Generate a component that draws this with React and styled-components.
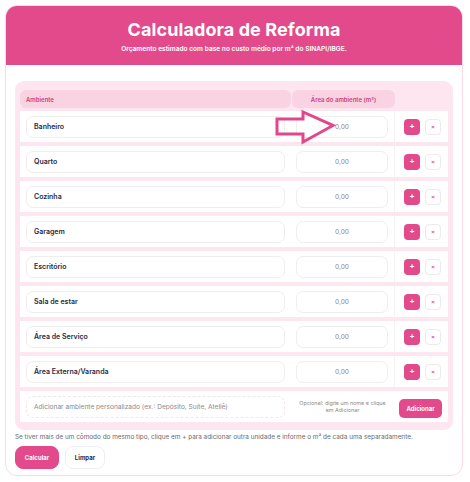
import React from "react";
import styled, { createGlobalStyle } from "styled-components";

const GlobalStyle = createGlobalStyle`
  body {
    margin: 0;
    background: #ffffff;
    font-family: Inter, "Liberation Sans", sans-serif;
  }
`;

const rooms = [
  "Banheiro",
  "Quarto",
  "Cozinha",
  "Garagem",
  "Escritório",
  "Sala de estar",
  "Área de Serviço",
  "Área Externa/Varanda",
];

const Page = styled.div`
  padding: 5px 7px 6px 5px;
`;

const Card = styled.div`
  border: 1px solid #fbdbe8;
  border-radius: 12px;
  overflow: hidden;
  background: #fff;
  padding-bottom: 6px;
`;

const Header = styled.header`
  background: #e24a8b;
  height: 59px;
  display: flex;
  flex-direction: column;
  align-items: center;
  justify-content: center;
  color: #fff;
`;

const Title = styled.h1`
  margin: 0;
  font-size: 18px;
  font-weight: 700;
  line-height: 22px;
  letter-spacing: 0.1px;
`;

const Subtitle = styled.p`
  margin: 4px 0 0;
  font-size: 6.6px;
  font-weight: 600;
`;

const Body = styled.div`
  padding: 16px 9px 0 9px;
`;

const Panel = styled.div`
  position: relative;
  background: #fde6ef;
  border-radius: 9px;
  padding: 9px 5px 8px 5px;
  display: flex;
  flex-direction: column;
  gap: 4px;
`;

const Cols = styled.div`
  display: grid;
  grid-template-columns: 271px 103px 1fr;
`;

const HeadRow = styled(Cols)`
  height: 18px;
  margin-bottom: -1px;
  gap: 1px;
`;

const HeadCell = styled.div`
  background: #fad3e3;
  border-radius: 6px;
  color: #c8427f;
  font-size: 6px;
  font-weight: 600;
  display: flex;
  align-items: center;
  justify-content: ${(p) => (p.$center ? "center" : "flex-start")};
  padding-left: ${(p) => (p.$center ? "0" : "6px")};
`;

const Row = styled(Cols)`
  background: #fff;
  height: 31px;
  align-items: center;
`;

const NameInput = styled.div`
  margin: 0 6px;
  height: 22px;
  border: 1px solid ${(p) => (p.$dashed ? "#f1e6ea" : "#eeeeee")};
  border-style: ${(p) => (p.$dashed ? "dashed" : "solid")};
  border-radius: 7px;
  box-sizing: border-box;
  display: flex;
  align-items: center;
  padding-left: 7px;
  font-size: ${(p) => (p.$dashed ? "6.6px" : "7px")};
  font-weight: ${(p) => (p.$dashed ? 400 : 600)};
  color: ${(p) => (p.$dashed ? "#8a8a8a" : "#1f2a44")};
`;

const AreaInput = styled.div`
  margin: 0 6px 0 5px;
  height: 22px;
  border: 1px solid #eeeeee;
  border-radius: 7px;
  box-sizing: border-box;
  display: flex;
  align-items: center;
  justify-content: center;
  font-size: 6.6px;
  color: #8a8a8a;
`;

const Hint = styled.div`
  font-size: 5.4px;
  line-height: 7px;
  color: #8a8a8a;
  text-align: center;
  padding: 0 4px;
`;

const Actions = styled.div`
  align-self: stretch;
  border-left: 1px solid #f6f1f3;
  display: flex;
  align-items: center;
  gap: 5px;
  padding-left: 9px;
`;

const PlusBtn = styled.button`
  width: 16px;
  height: 16px;
  border: none;
  border-radius: 4px;
  background: #e24a8b;
  color: #fff;
  font-size: 8px;
  font-weight: 700;
  padding: 0;
  display: flex;
  align-items: center;
  justify-content: center;
`;

const RemoveBtn = styled.button`
  width: 16px;
  height: 16px;
  border: 1px solid #f0e8eb;
  border-radius: 4px;
  background: #fff;
  color: #e24a8b;
  font-size: 6px;
  font-weight: 700;
  padding: 0;
  display: flex;
  align-items: center;
  justify-content: center;
`;

const AddBtn = styled.button`
  margin-left: 5px;
  width: 43px;
  height: 19px;
  border: none;
  border-radius: 5px;
  background: #e24a8b;
  color: #fff;
  font-family: inherit;
  font-size: 6px;
  font-weight: 700;
  padding: 0;
`;

const Arrow = styled.svg`
  position: absolute;
  left: 257px;
  top: 26px;
  pointer-events: none;
`;

const Note = styled.p`
  margin: 3px 0 0;
  font-size: 6.4px;
  color: #6b6b6b;
`;

const Buttons = styled.div`
  display: flex;
  gap: 6px;
  margin-top: 5px;
`;

const Button = styled.button`
  width: ${(p) => (p.$primary ? "44px" : "40px")};
  height: 23px;
  border-radius: 8px;
  border: 1px solid ${(p) => (p.$primary ? "#e24a8b" : "#eeeeee")};
  background: ${(p) => (p.$primary ? "#e24a8b" : "#fff")};
  color: ${(p) => (p.$primary ? "#fff" : "#1f2a44")};
  font-family: inherit;
  font-size: 6px;
  font-weight: 700;
  padding: 0;
`;

export default function App() {
  return (
    <>
      <GlobalStyle />
      <Page>
        <Card>
          <Header>
            <Title>Calculadora de Reforma</Title>
            <Subtitle>Orçamento estimado com base no custo médio por m² do SINAPI/IBGE.</Subtitle>
          </Header>
          <Body>
            <Panel>
              <HeadRow>
                <HeadCell>Ambiente</HeadCell>
                <HeadCell $center>Área do ambiente (m²)</HeadCell>
              </HeadRow>
              {rooms.map((room) => (
                <Row key={room}>
                  <NameInput>{room}</NameInput>
                  <AreaInput>0,00</AreaInput>
                  <Actions>
                    <PlusBtn>+</PlusBtn>
                    <RemoveBtn>×</RemoveBtn>
                  </Actions>
                </Row>
              ))}
              <Row>
                <NameInput $dashed>
                  Adicionar ambiente personalizado (ex.: Depósito, Suíte, Ateliê)
                </NameInput>
                <Hint>Opcional: digite um nome e clique em Adicionar</Hint>
                <div>
                  <AddBtn>Adicionar</AddBtn>
                </div>
              </Row>
              <Arrow width="66" height="40" viewBox="0 0 66 40">
                <polygon
                  points="5,12 31,12 31,5 61,18.5 31,35 31,27 5,27"
                  fill="none"
                  stroke="#e2468b"
                  strokeWidth="3"
                  strokeLinejoin="miter"
                />
              </Arrow>
            </Panel>
            <Note>
              Se tiver mais de um cômodo do mesmo tipo, clique em + para adicionar outra unidade e
              informe o m² de cada uma separadamente.
            </Note>
            <Buttons>
              <Button $primary>Calcular</Button>
              <Button>Limpar</Button>
            </Buttons>
          </Body>
        </Card>
      </Page>
    </>
  );
}
